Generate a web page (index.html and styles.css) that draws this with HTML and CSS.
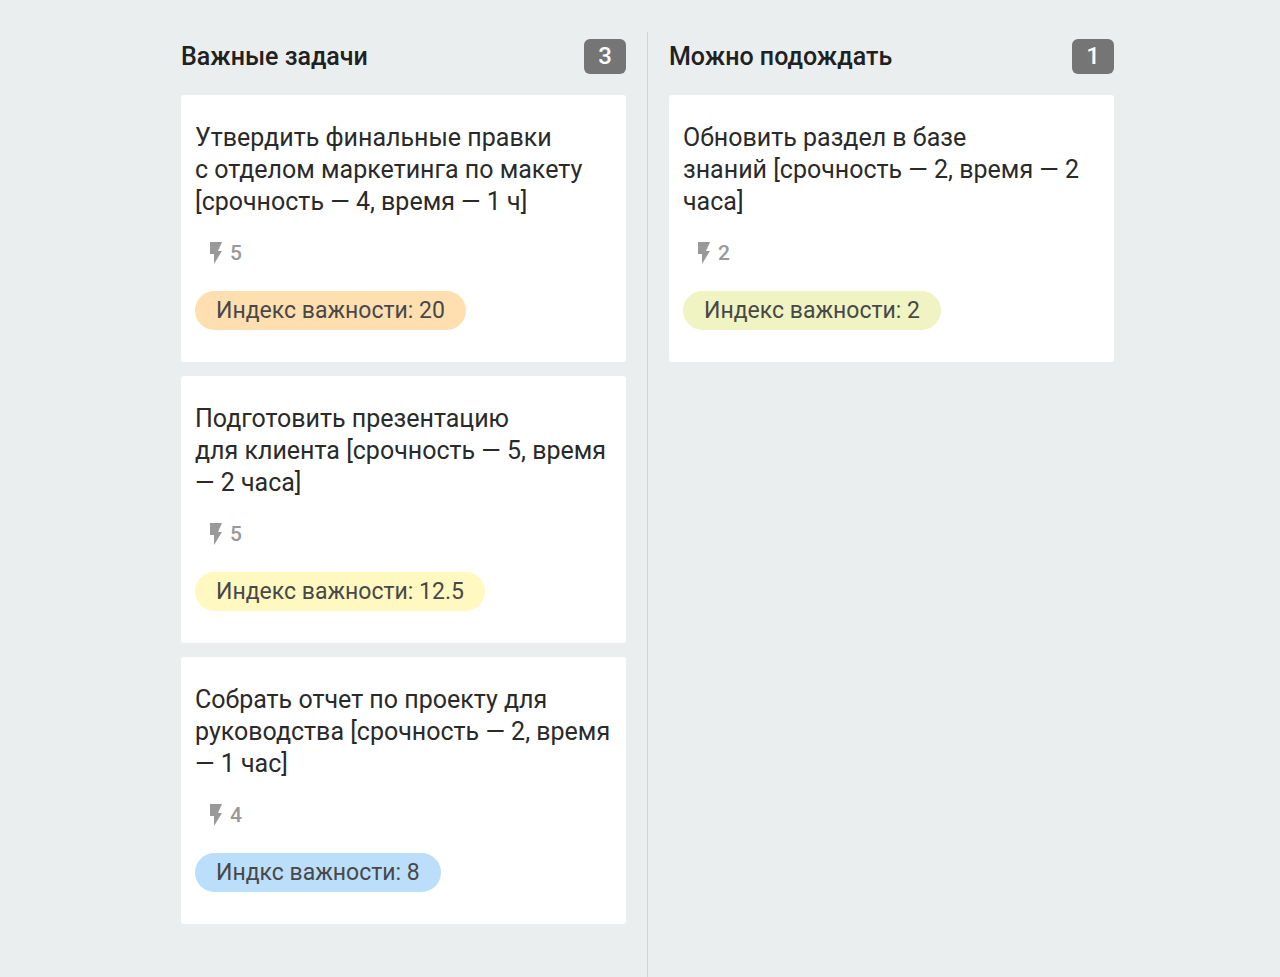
FILE: index.html
```html
<!DOCTYPE html>
<html lang="ru">
<head>
<meta charset="utf-8">
<meta name="viewport" content="width=device-width, initial-scale=1">
<title>Задачи</title>
<link rel="stylesheet" href="styles.css">
</head>
<body>
<svg class="defs" aria-hidden="true">
  <symbol id="bolt" viewBox="0 0 12 22"><path d="M0 0v12h4v10l8-13H8l4-9z"/></symbol>
</svg>
<main class="board">
  <section class="column">
    <header class="column-header">
      <h2 class="column-title">Важные задачи</h2>
      <span class="count">3</span>
    </header>
    <article class="card">
      <p class="card-title">Утвердить финальные правки<br>с отделом маркетинга по макету<br>[срочность — 4, время — 1 ч]</p>
      <div class="effort"><svg class="bolt" aria-hidden="true"><use href="#bolt"/></svg>5</div>
      <span class="tag tag-orange">Индекс важности: 20</span>
    </article>
    <article class="card">
      <p class="card-title">Подготовить презентацию<br>для клиента [срочность — 5, время<br>— 2 часа]</p>
      <div class="effort"><svg class="bolt" aria-hidden="true"><use href="#bolt"/></svg>5</div>
      <span class="tag tag-yellow">Индекс важности: 12.5</span>
    </article>
    <article class="card">
      <p class="card-title">Собрать отчет по проекту для<br>руководства [срочность — 2, время<br>— 1 час]</p>
      <div class="effort"><svg class="bolt" aria-hidden="true"><use href="#bolt"/></svg>4</div>
      <span class="tag tag-blue">Индкс важности: 8</span>
    </article>
  </section>
  <section class="column">
    <header class="column-header">
      <h2 class="column-title">Можно подождать</h2>
      <span class="count">1</span>
    </header>
    <article class="card">
      <p class="card-title">Обновить раздел в базе<br>знаний [срочность — 2, время — 2<br>часа]</p>
      <div class="effort"><svg class="bolt" aria-hidden="true"><use href="#bolt"/></svg>2</div>
      <span class="tag tag-lime">Индекс важности: 2</span>
    </article>
  </section>
</main>
</body>
</html>
```
FILE: styles.css
```css
* {
  box-sizing: border-box;
}

body {
  margin: 0;
  background: #eaeeef;
  color: #2a2a2a;
  font-family: Roboto, "Noto Sans", sans-serif;
}

.defs {
  position: absolute;
  width: 0;
  height: 0;
}

.board {
  display: grid;
  grid-template-columns: 1fr 1fr;
  max-width: 990px;
  min-height: 100vh;
  margin: 0 auto;
  padding: 32px 0 0 14px;
}

.column {
  display: flex;
  flex-direction: column;
  gap: 14px;
  padding: 7px 21px 21px 22px;
}

.column + .column {
  padding-left: 21px;
  border-left: 1px solid #cfd3d4;
}

.column-header {
  display: flex;
  align-items: center;
  justify-content: space-between;
  height: 35px;
  margin-bottom: 7px;
}

.column-title {
  margin: 0;
  color: #212121;
  font-size: 25px;
  font-weight: 500;
}

.count {
  width: 42px;
  border-radius: 6px;
  background: #757575;
  color: #fff;
  font-size: 24px;
  font-weight: 500;
  line-height: 35px;
  text-align: center;
}

.card {
  display: flex;
  flex-direction: column;
  align-items: flex-start;
  padding: 27px 14px 32px;
  border-radius: 3px;
  background: #fff;
}

.card-title {
  margin: 0;
  font-size: 25px;
  line-height: 32px;
  white-space: nowrap;
}

.effort {
  display: flex;
  align-items: center;
  gap: 8px;
  margin: 21px 0 24px 15px;
  color: #999;
  font-size: 21px;
  font-weight: 500;
  line-height: 28px;
}

.bolt {
  width: 12px;
  height: 22px;
  fill: #999;
}

.tag {
  padding: 0 21px;
  border-radius: 20px;
  color: #484848;
  font-size: 23px;
  line-height: 39px;
}

.tag-orange {
  background: #ffdfb0;
}

.tag-yellow {
  background: #fff8c0;
}

.tag-blue {
  background: #bbdefb;
}

.tag-lime {
  background: #eff4c2;
}
```
